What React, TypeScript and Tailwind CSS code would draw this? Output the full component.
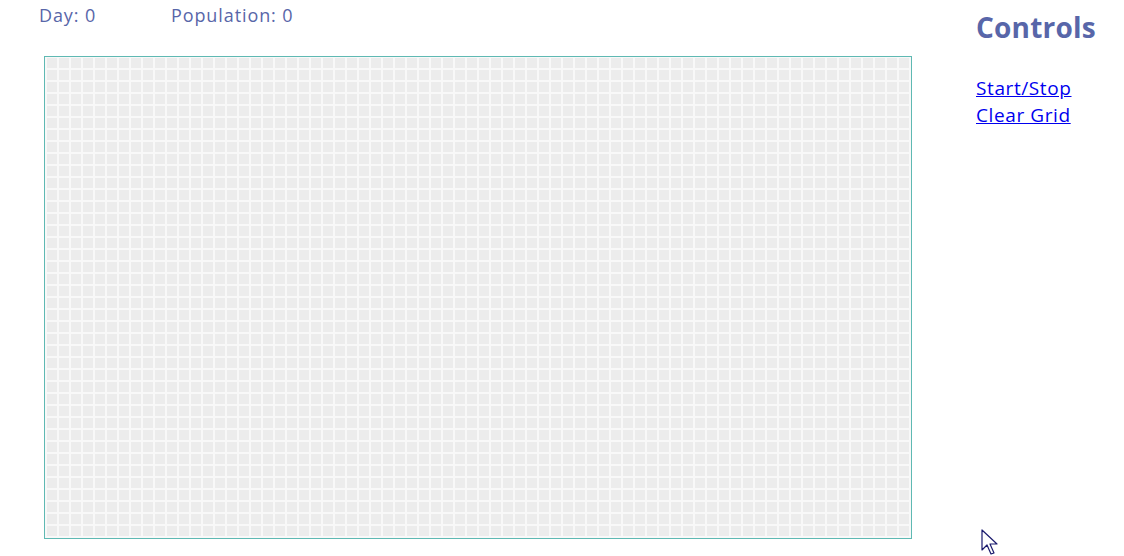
import React from 'react';

const COLS = 72;
const ROWS = 40;

const Grid = () => {
  const cells = Array.from({ length: COLS * ROWS });
  return (
    <div className="border border-[#5fb9b3] bg-[#f8f8f8] px-px pb-px w-fit">
      <div className="grid grid-cols-[repeat(72,12px)]">
        {cells.map((_, i) => (
          <div key={i} className="w-[12px] h-[12px] p-px">
            <div className="w-full h-full bg-[#ececec]" />
          </div>
        ))}
      </div>
    </div>
  );
};

const App = () => {
  return (
    <div className="relative w-[1124px] h-[556px] bg-white overflow-hidden font-['Open_Sans',sans-serif]">
      <div className="flex">
        <div className="pl-[44px] pt-[3px]">
          <div className="flex text-[18px] leading-[25px] tracking-[0.9px] text-[#5866a9] -ml-[5px]">
            <span className="w-[132px]">Day: 0</span>
            <span>Population: 0</span>
          </div>
          <div className="mt-[28px]">
            <Grid />
          </div>
        </div>
        <div className="ml-[64px] pt-[8px]">
          <h1 className="text-[28px] leading-[38px] font-bold tracking-[0.2px] text-[#5866a9]">Controls</h1>
          <div className="mt-[29px] flex flex-col text-[19px] leading-[27px] tracking-[0.6px]">
            <a href="#" className="text-[#0000ee] underline">Start/Stop</a>
            <a href="#" className="text-[#0000ee] underline">Clear Grid</a>
          </div>
        </div>
      </div>
      <svg className="absolute left-[981px] top-[529px]" width="20" height="28" viewBox="0 0 20 28">
        <path d="M1 1 L1 21 L6 16 L10 25 L13 24 L9 15 L16 15 Z" fill="white" stroke="#1a1a6e" strokeWidth="1.2" strokeLinejoin="round" />
      </svg>
    </div>
  );
};

export default App;
